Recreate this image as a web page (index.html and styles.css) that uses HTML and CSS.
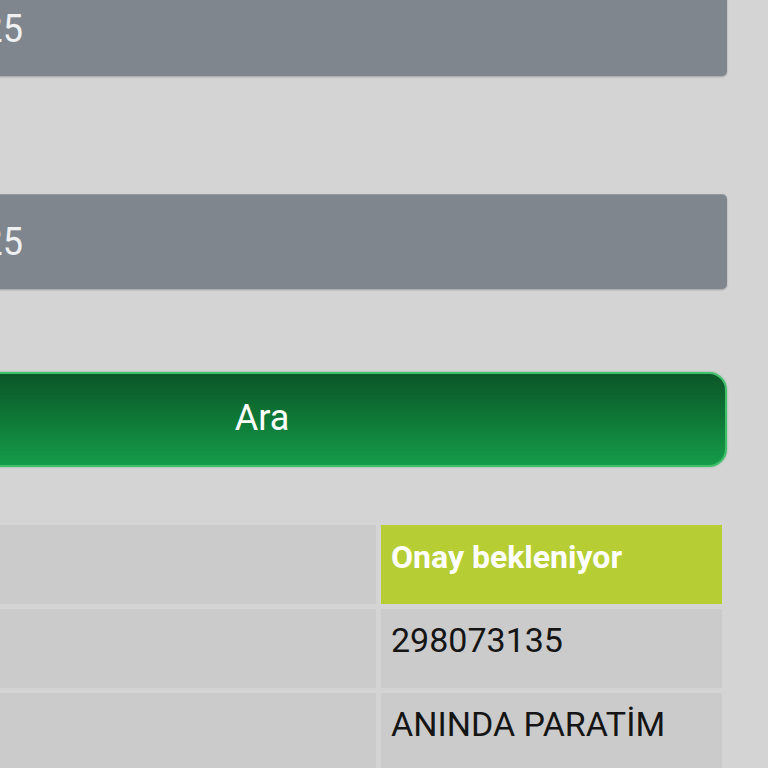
FILE: index.html
```html
<!DOCTYPE html>
<html lang="tr">
<head>
<meta charset="utf-8">
<title>Arama</title>
<link rel="stylesheet" href="styles.css">
</head>
<body>
<div class="page">
  <div class="field field-first"><span class="field-text">01.01.2025</span></div>
  <div class="field field-second"><span class="field-text">31.01.2025</span></div>
  <button class="search-btn" type="button">Ara</button>
  <div class="result-table">
    <div class="cell"></div>
    <div class="cell cell-status">Onay bekleniyor</div>
    <div class="cell"></div>
    <div class="cell">298073135</div>
    <div class="cell"></div>
    <div class="cell">ANINDA PARATİM</div>
  </div>
</div>
</body>
</html>
```

FILE: styles.css
```css
html, body {
  margin: 0;
  padding: 0;
  background: #d4d4d4;
  overflow: hidden;
  width: 768px;
  height: 768px;
}

.page {
  display: flex;
  flex-direction: column;
  margin-left: -203px;
  width: 930px;
  margin-top: -19px;
  font-family: Roboto, "Noto Sans", sans-serif;
}

.field {
  height: 95px;
  box-sizing: border-box;
  background: #7f868d;
  border-radius: 5px;
  box-shadow: 0 1px 2px rgba(0, 0, 0, 0.25), inset 0 1px 0 rgba(160, 170, 178, 0.6);
  display: flex;
  align-items: center;
  justify-content: flex-end;
  padding-right: 704px;
  color: #eef0f2;
  font-size: 36px;
  line-height: 40px;
  white-space: nowrap;
}

.field-second {
  margin-top: 118px;
}

.field-text {
  display: block;
  transform: scaleY(1.08);
}

.search-btn {
  margin-top: 83px;
  height: 95px;
  border: 2px solid #3fbf6a;
  border-radius: 18px;
  background: linear-gradient(to bottom, #0b5628 0%, #0e7535 45%, #159c4a 100%);
  color: #ffffff;
  font-family: Roboto, "Noto Sans", sans-serif;
  font-size: 36px;
  padding: 0 0 4px;
  box-shadow: 0 0 2px rgba(40, 170, 80, 0.6);
}

.result-table {
  margin-top: 58px;
  width: 925px;
  display: grid;
  grid-template-columns: 1fr 341px;
  grid-auto-rows: 79px;
  gap: 5px;
}

.cell {
  background: #cbcbcb;
  color: #151515;
  font-size: 34px;
  line-height: 40px;
  padding: 11px 10px 0;
  white-space: nowrap;
}

.cell-status {
  background: #b6ce34;
  color: #ffffff;
  font-weight: 700;
  font-size: 32px;
  padding-top: 12px;
}
```
